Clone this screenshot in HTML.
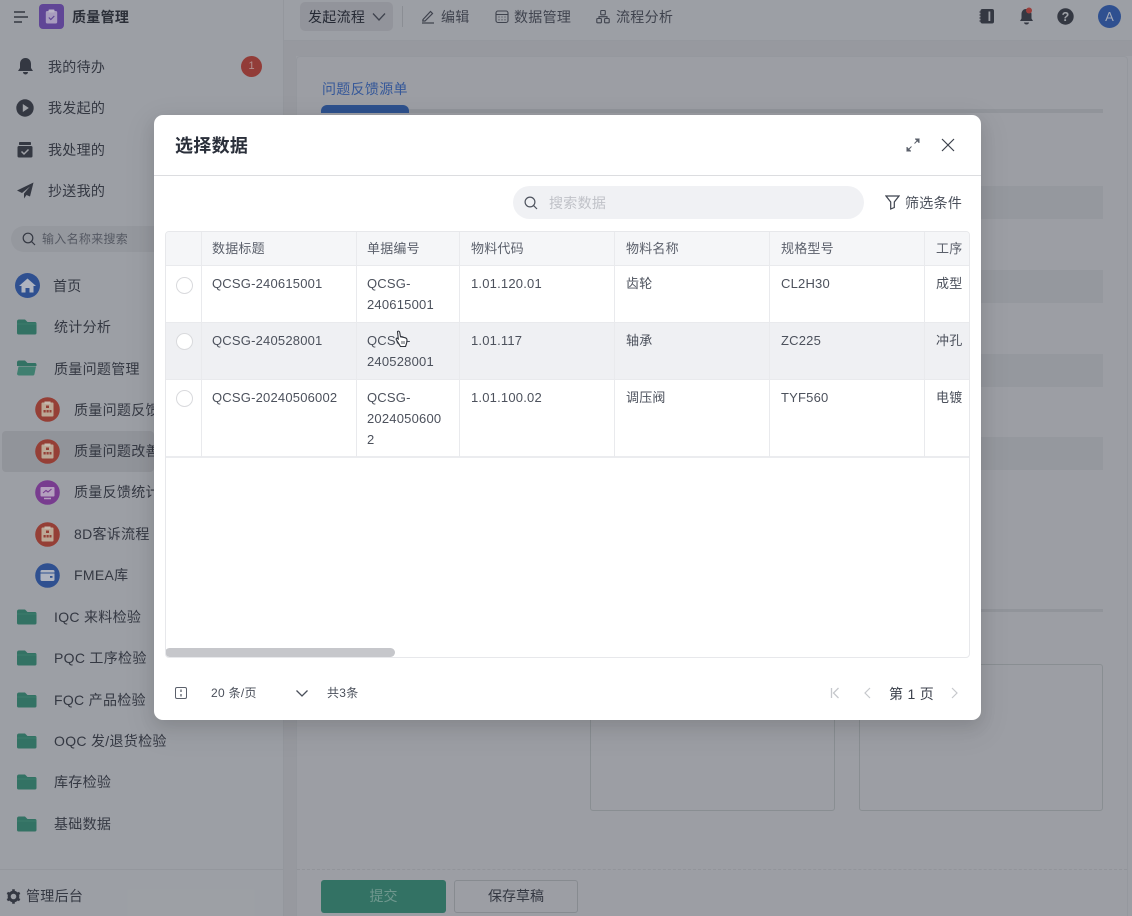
<!DOCTYPE html>
<html lang="zh"><head><meta charset="utf-8"><title>选择数据</title>
<style>
*{box-sizing:border-box}
html,body{margin:0;padding:0}
body{width:1132px;height:916px;overflow:hidden;position:relative;background:#bfc2c7;font-family:"Liberation Sans","Noto Sans CJK SC",sans-serif;font-size:14px;color:#3c414c}
.a{position:absolute}
.t{position:absolute;white-space:nowrap;line-height:20px;letter-spacing:.3px}
svg{position:absolute;display:block}
.c{position:absolute;background:#e9eaed;width:1px;top:0}
.h{position:absolute;background:#e9eaed;height:1px;left:0;right:0}
.d{color:#4c515c;font-size:13px;letter-spacing:.2px}
.f{color:#5b606b;font-size:13px;letter-spacing:.2px}
.r{position:absolute;width:17px;height:17px;border-radius:50%;border:1px solid #d9dadd;background:#fff;left:10px}
</style></head><body>

<!-- main -->
<div class="a" style="left:283px;top:41px;width:849px;height:875px;background:#b8bbc0"></div>
<div class="a" style="left:283px;top:0;width:1px;height:916px;background:#b5b8bd"></div>
<div class="a" style="left:284px;top:0;width:848px;height:41px;background:#bfc2c7;border-bottom:1px solid #b6b9be"></div>
<div class="a" style="left:296px;top:56px;width:836px;height:860px;background:#bec1c6"></div>
<div class="a" style="left:296px;top:56px;width:832px;height:860px;border:1px solid #b6b9be;border-bottom:0;border-radius:4px 4px 0 0"></div>

<div class="a" style="left:300px;top:2px;width:93px;height:29px;background:#b2b5bb;border-radius:5px"></div>
<span class="t" style="left:308px;top:7px;color:#2a2f3a">发起流程</span>
<svg style="left:371px;top:11px" width="16" height="12" viewBox="0 0 16 12" fill="none" stroke="#4a4f5a" stroke-width="1.3"><path d="M2 2.500 8 9l6-6.500"/></svg>
<div class="a" style="left:402px;top:6px;width:1px;height:21px;background:#a9adb2"></div>
<svg style="left:421px;top:9px" width="14" height="15" viewBox="0 0 14 15" fill="none" stroke="#4a4f5a" stroke-width="1.200"><path d="M2 10.500 9.500 2.500l2 2L4 12H1.800zM1 14h12"/></svg>
<span class="t" style="left:441px;top:7px;color:#4a4f5a">编辑</span>
<svg style="left:495px;top:9px" width="14" height="15" viewBox="0 0 14 15" fill="none" stroke="#4a4f5a" stroke-width="1.100"><rect x="1" y="2" width="12" height="11.500" rx="2"/><path d="M1 5.500h12M3.500 8h1M6.500 8h1M9.500 8h1M3.500 10.800h1M6.500 10.800h1M9.500 10.800h1"/></svg>
<span class="t" style="left:514px;top:7px;color:#4a4f5a">数据管理</span>
<svg style="left:596px;top:9px" width="14" height="15" viewBox="0 0 14 15" fill="none" stroke="#4a4f5a" stroke-width="1.100"><rect x="4.700" y="1.500" width="4.600" height="4.300" rx=".8"/><rect x=".8" y="9.500" width="4.600" height="4.300" rx=".8"/><rect x="8.600" y="9.500" width="4.600" height="4.300" rx=".8"/><path d="M3 9.500V7.700h8v1.800"/></svg>
<span class="t" style="left:616px;top:7px;color:#4a4f5a">流程分析</span>

<!-- top right icons -->
<svg style="left:979px;top:8px" width="16" height="17" viewBox="0 0 16 17"><rect x="1.500" y="1" width="13.500" height="14.500" rx="2" fill="#3c414c"/><rect x="9.500" y="3.500" width="1.800" height="9.500" fill="#bfc2c7"/><path d="M.5 4h2M.5 7h2M.5 10h2M.5 13h2" stroke="#3c414c" stroke-width="1.200"/></svg>
<svg style="left:1018px;top:7px" width="17" height="18" viewBox="0 0 17 18"><path d="M8 2c-3 0-4.500 2.500-4.500 5v4.500L2 14h13l-1.500-2.500V7C13.500 4.500 11 2 8 2z" fill="#3c414c"/><path d="M6 15.500a2.500 2 0 0 0 5 0z" fill="#3c414c"/><circle cx="11" cy="3.500" r="3" fill="#bd4a44"/></svg>
<svg style="left:1057px;top:8px" width="17" height="17" viewBox="0 0 17 17"><circle cx="8.500" cy="8.500" r="8.200" fill="#3c414c"/><text x="8.500" y="13" text-anchor="middle" font-family="Liberation Sans" font-weight="700" font-size="12.500" fill="#c4c7cb">?</text></svg>
<div class="a" style="left:1098px;top:5px;width:23px;height:23px;border-radius:50%;background:#3660ad;color:#c7cfdf;font-size:13px;line-height:23px;text-align:center">A</div>

<!-- form behind -->
<span class="t" style="left:322px;top:79px;color:#3f6ab8">问题反馈源单</span>
<div class="a" style="left:322px;top:109px;width:781px;height:4px;background:#b1b4b9"></div>
<div class="a" style="left:321px;top:105px;width:88px;height:8px;background:#3561a9;border-radius:6px 6px 0 0"></div>
<div class="a" style="left:900px;top:186px;width:203px;height:33px;background:#b6b9be"></div>
<div class="a" style="left:900px;top:270px;width:203px;height:33px;background:#b6b9be"></div>
<div class="a" style="left:900px;top:354px;width:203px;height:33px;background:#b6b9be"></div>
<div class="a" style="left:900px;top:437px;width:203px;height:33px;background:#b6b9be"></div>
<div class="a" style="left:900px;top:609px;width:203px;height:3px;background:#b1b4b9"></div>
<div class="a" style="left:590px;top:640px;width:245px;height:171px;border:1px solid #a7adb0;border-radius:3px"></div>
<div class="a" style="left:859px;top:664px;width:244px;height:147px;border:1px solid #a7adb0;border-radius:3px"></div>
<div class="a" style="left:297px;top:869px;width:830px;border-top:1px dashed #b2b5ba"></div>
<div class="a" style="left:321px;top:880px;width:125px;height:33px;background:#3b8a76;border-radius:3px;color:#87b9ab;line-height:33px;text-align:center">提交</div>
<div class="a" style="left:454px;top:880px;width:124px;height:33px;border:1px solid #a4a9ad;border-radius:3px;color:#3c414c;line-height:31px;text-align:center">保存草稿</div>

<!-- sidebar -->
<svg style="left:13px;top:10px" width="16" height="14" viewBox="0 0 16 14" stroke="#3c414c" stroke-width="1.500"><path d="M1 2h11M1 7h14M1 12h8"/></svg>
<div class="a" style="left:39px;top:4px;width:25px;height:25px;background:#7353b4;border-radius:4px"></div>
<svg style="left:45px;top:9px" width="13" height="15" viewBox="0 0 13 15"><rect x=".8" y="2" width="11.400" height="12.500" rx="1.500" fill="#cdbfe6"/><rect x="3.500" y=".5" width="6" height="3" rx=".8" fill="#e3dbf2"/><path d="M3.800 8.500l2 2 3.500-3.500" fill="none" stroke="#7353b4" stroke-width="1.200"/></svg>
<span class="t" style="left:72px;top:7px;font-weight:700;color:#31363f">质量管理</span>

<svg style="left:17px;top:57px" width="17" height="19" viewBox="0 0 17 19"><path d="M8.500 1c-3.700 0-5.500 2.900-5.500 6v4L1 14h15l-2-3V7c0-3.100-1.800-6-5.500-6z" fill="#3c414c"/><path d="M6 15h5a2.500 2.500 0 0 1-5 0z" fill="#3c414c"/></svg>
<span class="t" style="left:48px;top:57px">我的待办</span>
<div class="a" style="left:241px;top:56px;width:21px;height:21px;border-radius:50%;background:#b2473f;color:#d9b0ad;font-size:11px;line-height:21px;text-align:center">1</div>
<svg style="left:16px;top:99px" width="18" height="18" viewBox="0 0 18 18"><circle cx="9" cy="9" r="8.700" fill="#3c414c"/><path d="M6.800 5v8l6-4z" fill="#c3c6ca"/></svg>
<span class="t" style="left:48px;top:98px">我发起的</span>
<svg style="left:17px;top:141px" width="16" height="17" viewBox="0 0 16 17"><rect x="2" y="1" width="12" height="3" rx=".8" fill="#3c414c"/><rect x=".5" y="5" width="15" height="11.500" rx="1.500" fill="#3c414c"/><path d="M4.500 10.500l2.500 2.500 4.500-4.500" fill="none" stroke="#c3c6ca" stroke-width="1.500"/></svg>
<span class="t" style="left:48px;top:140px">我处理的</span>
<svg style="left:17px;top:182px" width="17" height="17" viewBox="0 0 17 17"><path d="M16.500 .5 0 8.500l5 2.500L13 4.500 7 11.500v5l2.500-3.500 3.500 1.500z" fill="#3c414c"/></svg>
<span class="t" style="left:48px;top:181px">抄送我的</span>

<div class="a" style="left:11px;top:226px;width:260px;height:26px;background:#b6b9be;border-radius:13px"></div>
<svg style="left:22px;top:232px" width="14" height="14" viewBox="0 0 14 14" fill="none" stroke="#3c414c" stroke-width="1.200"><circle cx="6" cy="6" r="4.800"/><path d="M9.500 9.500 13 13"/></svg>
<span class="t" style="left:42px;top:229px;font-size:12px;color:#666b75">输入名称来搜索</span>

<div class="a" style="left:15px;top:273px;width:25px;height:25px;border-radius:50%;background:#3660ad"></div>
<svg style="left:19px;top:278px" width="17" height="15" viewBox="0 0 17 15"><path d="M8.500 .5 0 8h2.500v6.500h4V10h4v4.500h4V8H17z" fill="#d5dbe8"/></svg>
<span class="t" style="left:53px;top:276px">首页</span>

<!-- folders -->
<svg width="0" height="0"><defs><g id="fc"><path d="M0 2.500C0 1.200.8.500 2 .5h6l2.500 2.500H18c1 0 1.500.700 1.500 1.500V14c0 1-.7 1.500-1.500 1.500H1.500C.7 15.500 0 15 0 14z" fill="#3b8a76"/><path d="M0 5h19.500" stroke="#4b9a85" stroke-width=".8"/></g><g id="fo"><path d="M0 2.500C0 1.200.8.500 2 .5h6l2.500 2.500H18c1 0 1.500.7 1.500 1.500V6H0z" fill="#3b8a76"/><path d="M1.500 6.500H19L17.500 14c-.2 1-.7 1.500-1.500 1.500H2c-1 0-1.700-.5-2-1.500z" fill="#4b9a85"/></g></defs></svg>
<svg style="left:17px;top:319px" width="20" height="16"><use href="#fc"/></svg><span class="t" style="left:54px;top:317px">统计分析</span>
<svg style="left:17px;top:360px" width="20" height="16"><use href="#fo"/></svg><span class="t" style="left:54px;top:359px">质量问题管理</span>
<div class="a" style="left:2px;top:431px;width:152px;height:41px;background:#b1b4b9;border-radius:4px"></div>

<svg width="0" height="0"><defs><g id="rd"><circle cx="12.500" cy="12.500" r="12.300" fill="#b64a3c"/><rect x="6.500" y="5.500" width="12" height="14" rx="1" fill="#e5cdb4"/><rect x="9.500" y="4.500" width="6" height="2.500" fill="#f0e3d3"/><rect x="11" y="8.500" width="3" height="2.500" fill="#b64a3c"/><path d="M8.500 13h2.200v2.500H8.500zM11.500 13h2.200v2.500h-2.200zM14.500 13h2v2.500h-2z" fill="#b64a3c"/></g></defs></svg>
<svg style="left:35px;top:397px" width="25" height="25"><use href="#rd"/></svg><span class="t" style="left:74px;top:400px">质量问题反馈</span>
<svg style="left:35px;top:439px" width="25" height="25"><use href="#rd"/></svg><span class="t" style="left:74px;top:441px">质量问题改善</span>
<svg style="left:35px;top:480px" width="25" height="25" viewBox="0 0 25 25"><circle cx="12.500" cy="12.500" r="12.300" fill="#9147ac"/><rect x="5.500" y="7" width="14" height="9.500" rx="1" fill="#dcc4e6"/><path d="M8 13l3-2.500 2 1.500 3.500-3" fill="none" stroke="#9147ac" stroke-width="1.100"/><path d="M9 18.500h7" stroke="#dcc4e6" stroke-width="1.500"/></svg><span class="t" style="left:74px;top:482px">质量反馈统计</span>
<svg style="left:35px;top:522px" width="25" height="25"><use href="#rd"/></svg><span class="t" style="left:74px;top:524px">8D客诉流程</span>
<svg style="left:35px;top:563px" width="25" height="25" viewBox="0 0 25 25"><circle cx="12.500" cy="12.500" r="12.300" fill="#3660ad"/><rect x="5.500" y="7" width="14" height="11" rx="1.500" fill="#d5dbe8"/><rect x="5.500" y="9.500" width="14" height="1" fill="#3660ad"/><rect x="15" y="13" width="2.500" height="1.800" fill="#3660ad"/></svg><span class="t" style="left:74px;top:565px">FMEA库</span>

<svg style="left:17px;top:609px" width="20" height="16"><use href="#fc"/></svg><span class="t" style="left:54px;top:607px">IQC 来料检验</span>
<svg style="left:17px;top:650px" width="20" height="16"><use href="#fc"/></svg><span class="t" style="left:54px;top:648px">PQC 工序检验</span>
<svg style="left:17px;top:692px" width="20" height="16"><use href="#fc"/></svg><span class="t" style="left:54px;top:690px">FQC 产品检验</span>
<svg style="left:17px;top:733px" width="20" height="16"><use href="#fc"/></svg><span class="t" style="left:54px;top:731px">OQC 发/退货检验</span>
<svg style="left:17px;top:774px" width="20" height="16"><use href="#fc"/></svg><span class="t" style="left:54px;top:772px">库存检验</span>
<svg style="left:17px;top:816px" width="20" height="16"><use href="#fc"/></svg><span class="t" style="left:54px;top:814px">基础数据</span>

<div class="a" style="left:0;top:869px;width:283px;height:1px;background:#b5b8bd"></div>
<svg style="left:6px;top:889px" width="15" height="15" viewBox="0 0 15 15"><circle cx="7.500" cy="7.500" r="4.300" fill="none" stroke="#3c414c" stroke-width="3"/><path d="M7.500 .3v3M7.500 11.700v3M1.300 3.900l2.600 1.500M11.100 9.600l2.600 1.500M1.300 11.100l2.600-1.500M11.100 5.400l2.600-1.500" stroke="#3c414c" stroke-width="2.600"/></svg>
<span class="t" style="left:26px;top:886px">管理后台</span>

<!-- dimming overlay -->
<div class="a" style="left:0;top:0;width:1132px;height:916px;background:rgba(20,22,30,.2)"></div>

<!-- modal -->
<div class="a" style="left:154px;top:115px;width:827px;height:605px;background:#fff;border-radius:9px;box-shadow:0 6px 16px rgba(0,0,0,.1),0 9px 28px 8px rgba(0,0,0,.05);overflow:hidden">
 <span class="t" style="left:21px;top:20px;font-size:18px;line-height:22px;font-weight:700;color:#2a2f3a">选择数据</span>
 <svg style="left:752px;top:23px" width="14" height="14" viewBox="0 0 14 14" fill="none" stroke="#5b606b" stroke-width="1"><path d="M8.500 5.500 11.500 2.500M9 1h4v4M5.500 8.500 2.500 11.500M1 9v4h4"/><path d="M13 1l-3 .4 2.600 2.600zM1 13l3-.4L1.400 10z" fill="#5b606b"/></svg>
 <svg style="left:787px;top:23px" width="14" height="14" viewBox="0 0 14 14" fill="none" stroke="#3c414c" stroke-width="1.200"><path d="M1 1l12 12M13 1 1 13"/></svg>
 <div class="h" style="top:60px;background:#dcdde0"></div>
 <div class="a" style="left:359px;top:71px;width:351px;height:33px;background:#f0f1f4;border-radius:17px"></div>
 <svg style="left:370px;top:81px" width="14" height="14" viewBox="0 0 14 14" fill="none" stroke="#4f545f" stroke-width="1.200"><circle cx="6" cy="6" r="4.900"/><path d="M9.600 9.600 13 13"/></svg>
 <span class="t" style="left:395px;top:78px;color:#c0c2c8">搜索数据</span>
 <svg style="left:731px;top:80px" width="15" height="15" viewBox="0 0 15 15" fill="none" stroke="#3f444f" stroke-width="1.200"><path d="M1 1h13L9.300 7v5.500L5.700 14V7z"/></svg>
 <span class="t" style="left:751px;top:78px;color:#4b505b">筛选条件</span>

 <!-- table -->
 <div class="a" style="left:11px;top:116px;width:805px;height:427px;border:1px solid #e7e8eb;border-radius:4px;overflow:hidden">
  <div class="a" style="left:0;top:0;right:0;height:33px;background:#f5f6f8"></div>
  <div class="a" style="left:0;top:90px;right:0;height:57px;background:#eff0f3"></div>
  <div class="h" style="top:33px"></div><div class="h" style="top:90px"></div><div class="h" style="top:147px"></div>
  <div class="h" style="top:224px;height:2px;background:#ebecef"></div>
  <div class="c" style="left:35px;height:225px"></div>
  <div class="c" style="left:190px;height:225px"></div>
  <div class="c" style="left:293px;height:225px"></div>
  <div class="c" style="left:448px;height:225px"></div>
  <div class="c" style="left:603px;height:225px"></div>
  <div class="c" style="left:758px;height:225px"></div>

  <span class="t f" style="left:46px;top:7px">数据标题</span>
  <span class="t f" style="left:201px;top:7px">单据编号</span>
  <span class="t f" style="left:305px;top:7px">物料代码</span>
  <span class="t f" style="left:460px;top:7px">物料名称</span>
  <span class="t f" style="left:615px;top:7px">规格型号</span>
  <span class="t f" style="left:770px;top:7px">工序</span>

  <div class="r" style="top:45px"></div>
  <span class="t d" style="left:46px;top:42px">QCSG-240615001</span>
  <span class="t d" style="left:201px;top:42px">QCSG-</span><span class="t d" style="left:201px;top:63px">240615001</span>
  <span class="t d" style="left:305px;top:42px">1.01.120.01</span>
  <span class="t d" style="left:460px;top:42px">齿轮</span>
  <span class="t d" style="left:615px;top:42px">CL2H30</span>
  <span class="t d" style="left:770px;top:42px">成型</span>

  <div class="r" style="top:101px"></div>
  <span class="t d" style="left:46px;top:99px">QCSG-240528001</span>
  <span class="t d" style="left:201px;top:99px">QCSG-</span><span class="t d" style="left:201px;top:120px">240528001</span>
  <span class="t d" style="left:305px;top:99px">1.01.117</span>
  <span class="t d" style="left:460px;top:99px">轴承</span>
  <span class="t d" style="left:615px;top:99px">ZC225</span>
  <span class="t d" style="left:770px;top:99px">冲孔</span>

  <div class="r" style="top:158px"></div>
  <span class="t d" style="left:46px;top:156px">QCSG-20240506002</span>
  <span class="t d" style="left:201px;top:156px">QCSG-</span><span class="t d" style="left:201px;top:177px">2024050600</span><span class="t d" style="left:201px;top:198px">2</span>
  <span class="t d" style="left:305px;top:156px">1.01.100.02</span>
  <span class="t d" style="left:460px;top:156px">调压阀</span>
  <span class="t d" style="left:615px;top:156px">TYF560</span>
  <span class="t d" style="left:770px;top:156px">电镀</span>

  <div class="a" style="left:-1px;top:416px;width:230px;height:9px;background:#c6c7cb;border-radius:5px"></div>
 </div>

 <!-- cursor -->
 <svg style="left:240px;top:215px" width="15" height="19" viewBox="0 0 15 19"><path d="M3.500 1.500c1-.8 2-.2 2.200.8l.8 4.500 4 .8c1.500.3 2.500 1 2.500 2.500 0 2.500-.5 4-1.500 6.400H6.500L2.500 10c-.8-1-.2-2 .8-1.700l1 .7z" fill="#fff" stroke="#2f333b" stroke-width="1.100"/><path d="M8 11v3M10 11v3" stroke="#2f333b" stroke-width=".8"/></svg>

 <!-- footer -->
 <svg style="left:21px;top:572px" width="12" height="12" viewBox="0 0 12 12" fill="none" stroke="#5b606b" stroke-width="1"><rect x=".5" y=".5" width="11" height="11" rx="1.500"/><path d="M6 2.500v2.500M6 7v2.500" stroke-width="1.300"/></svg>
 <span class="t" style="left:57px;top:568px;font-size:12px;color:#4b505b">20 条/页</span>
 <svg style="left:141px;top:573px" width="14" height="11" viewBox="0 0 14 11" fill="none" stroke="#4a4f5a" stroke-width="1.300"><path d="M1.500 2.500 7 8l5.500-5.500"/></svg>
 <span class="t" style="left:173px;top:568px;font-size:12px;color:#4b505b">共3条</span>
 <svg style="left:676px;top:572px" width="10" height="12" viewBox="0 0 10 12" fill="none" stroke="#c6c8cc" stroke-width="1.300"><path d="M1.500 1v10M8.500 1 3.500 6l5 5"/></svg>
 <svg style="left:709px;top:572px" width="9" height="12" viewBox="0 0 9 12" fill="none" stroke="#c6c8cc" stroke-width="1.200"><path d="M7 1 2 6l5 5"/></svg>
 <span class="t" style="left:735px;top:569px;color:#3c414c">第 1 页</span>
 <svg style="left:796px;top:572px" width="9" height="12" viewBox="0 0 9 12" fill="none" stroke="#c6c8cc" stroke-width="1.200"><path d="M2 1l5 5-5 5"/></svg>
</div>
</body></html>
